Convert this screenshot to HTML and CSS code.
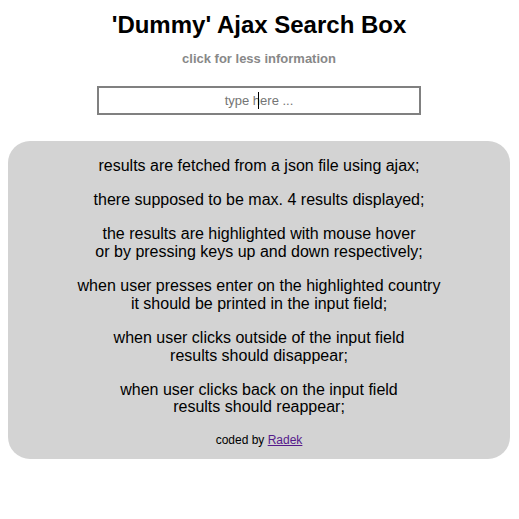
FILE: index.html
```html
<!DOCTYPE html>
<html>
<head>
<meta charset="utf-8">
<link rel="stylesheet" href="styles.css">
</head>
<body>
<h1 class="title">'Dummy' Ajax Search Box</h1>
<div class="toggle">click for less information</div>
<div class="search">
  <div class="search-wrap">
    <input class="search-input" type="text" placeholder="type here ...">
    <span class="caret"></span>
  </div>
</div>
<div class="info">
  <p>results are fetched from a json file using ajax;</p>
  <p>there supposed to be max. 4 results displayed;</p>
  <p>the results are highlighted with mouse hover<br>or by pressing keys up and down respectively;</p>
  <p>when user presses enter on the highlighted country<br>it should be printed in the input field;</p>
  <p>when user clicks outside of the input field<br>results should disappear;</p>
  <p>when user clicks back on the input field<br>results should reappear;</p>
  <p class="credit">coded by <a href="#">Radek</a></p>
</div>
</body>
</html>
```
FILE: styles.css
```css
body {
  margin: 8px 9px 8px 8px;
  font-family: "Liberation Sans", Arial, sans-serif;
  background: #fff;
  color: #000;
}
.title {
  font-size: 24px;
  font-weight: bold;
  text-align: center;
  margin: 3px 0 0;
  line-height: 28px;
}
.toggle {
  text-align: center;
  font-size: 13px;
  font-weight: bold;
  color: #888;
  margin-top: 12px;
}
.search {
  display: flex;
  justify-content: center;
  margin-top: 20px;
}
.search-wrap {
  position: relative;
}
.search-input {
  box-sizing: border-box;
  width: 324px;
  height: 29px;
  border: 2px solid #808080;
  text-align: center;
  font-family: "Liberation Sans", Arial, sans-serif;
  font-size: 13px;
  padding: 0;
  outline: none;
}
.search-input::placeholder {
  color: #757575;
}
.caret {
  position: absolute;
  left: 161px;
  top: 6px;
  width: 1px;
  height: 17px;
  background: #000;
}
.info {
  margin-top: 26px;
  background: #d3d3d3;
  border-radius: 22px;
  padding: 16px 0 12px;
  text-align: center;
  font-size: 16px;
  line-height: 17.6px;
}
.info p {
  margin: 0 0 16.6px;
}
.info .credit {
  font-size: 12px;
  line-height: 14px;
  margin: 0;
}
.credit a {
  color: #551a8b;
}
```
